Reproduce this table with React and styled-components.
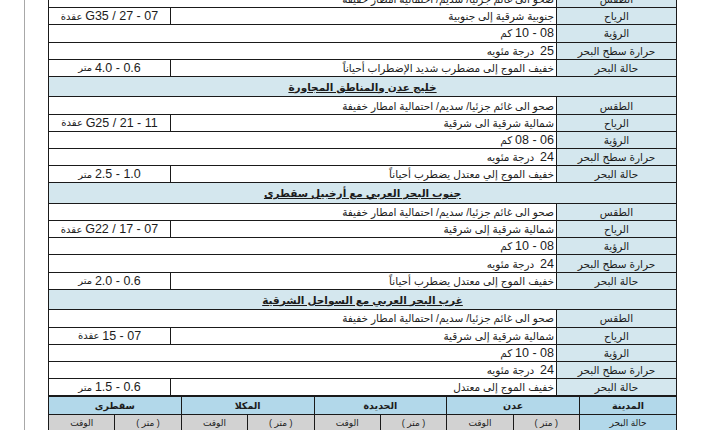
import styled, { createGlobalStyle } from 'styled-components';

const GlobalStyle = createGlobalStyle`
  html, body {
    margin: 0;
    padding: 0;
    background: #ffffff;
    overflow: hidden;
  }
  body {
    font-family: "Liberation Sans", "DejaVu Sans", sans-serif;
    color: #1c1c1c;
  }
`;

const COLOR = {
  line: '#1a1a1a',
  label: '#d4e7ee',
  section: '#d4e7ee',
  head: '#b2d8ea',
  sub: '#d2d2d2',
  page: '#a8a8a8',
};

const Sheet = styled.div`
  margin-left: 24px;
  width: 676px;
  height: 430px;
  border-left: 1px solid ${COLOR.page};
  border-right: 1px solid ${COLOR.page};
  padding: 0 24px 0 23px;
  box-sizing: content-box;
  display: flex;
  flex-direction: column;
`;

const Forecast = styled.div`
  direction: rtl;
  width: 629px;
  margin-top: -10px;
  border: 1.5px solid ${COLOR.line};
  border-bottom: none;
  box-sizing: border-box;
`;

const Row = styled.div`
  display: grid;
  grid-template-columns: ${(p) => (p.$split ? '119px 386px 1fr' : '119px 1fr')};
  height: 17.2px;
  border-bottom: 1.5px solid ${COLOR.line};
  box-sizing: border-box;
`;

const Label = styled.div`
  background: ${COLOR.label};
  font-size: 10.5px;
  display: flex;
  align-items: center;
  justify-content: center;
  white-space: nowrap;
  overflow: hidden;
`;

const Value = styled.div`
  border-right: 1.5px solid ${COLOR.line};
  font-size: 10.5px;
  display: flex;
  align-items: center;
  padding-right: 2px;
  white-space: nowrap;
  overflow: hidden;
`;

const Side = styled.div`
  border-right: 1.5px solid ${COLOR.line};
  font-size: 10px;
  display: flex;
  align-items: center;
  justify-content: center;
  white-space: nowrap;
  overflow: hidden;
`;

const Num = styled.span`
  font-family: "Liberation Sans", Arial, sans-serif;
  font-size: 12.5px;
`;

const SectionHead = styled.div`
  height: 20.5px;
  background: ${COLOR.section};
  border-bottom: 1.5px solid ${COLOR.line};
  box-sizing: border-box;
  display: flex;
  align-items: center;
  justify-content: center;
  font-size: 10.5px;
  font-weight: bold;
  text-decoration: underline;
`;

const Tides = styled.div`
  direction: rtl;
  width: 629px;
  display: grid;
  grid-template-columns: 97px repeat(8, 1fr);
  grid-auto-rows: 17.5px;
  border-top: 1.5px solid ${COLOR.line};
  border-right: 1.5px solid ${COLOR.line};
  box-sizing: border-box;
`;

const TideCell = styled.div`
  grid-column: span ${(p) => p.$span || 1};
  background: ${(p) => (p.$head ? COLOR.head : COLOR.sub)};
  border-left: 1.5px solid ${COLOR.line};
  border-bottom: 1.5px solid ${COLOR.line};
  font-size: ${(p) => (p.$head ? '9.5px' : '9px')};
  font-weight: ${(p) => (p.$head ? 'bold' : 'normal')};
  display: flex;
  align-items: center;
  justify-content: center;
  white-space: nowrap;
  overflow: hidden;
  ${(p) => p.$city && `background: ${COLOR.head};`}
`;

const WEATHER = 'صحو الى غائم جزئيا/ سديم/ احتمالية امطار خفيفة';

const sections = [
  {
    title: null,
    wind: 'جنوبية شرقية إلى جنوبية',
    speed: '07 - 27 / G35',
    vis: '08 - 10',
    sst: '25',
    sea: 'خفيف الموج إلى مضطرب شديد الإضطراب أحياناً',
    waves: '0.6 - 4.0',
  },
  {
    title: 'خليج عدن والمناطق المجاورة',
    wind: 'شمالية شرقية الى شرقية',
    speed: '11 - 21 / G25',
    vis: '06 - 08',
    sst: '24',
    sea: 'خفيف الموج إلي معتدل يضطرب أحياناً',
    waves: '1.0 - 2.5',
  },
  {
    title: 'جنوب البحر العربي مع أرخبيل سقطرى',
    wind: 'شمالية شرقية إلى شرقية',
    speed: '07 - 17 / G22',
    vis: '08 - 10',
    sst: '24',
    sea: 'خفيف الموج إلى معتدل يضطرب أحياناً',
    waves: '0.6 - 2.0',
  },
  {
    title: 'غرب البحر العربي مع السواحل الشرقية',
    wind: 'شمالية شرقية إلى شرقية',
    speed: '07 - 15',
    vis: '08 - 10',
    sst: '24',
    sea: 'خفيف الموج إلى معتدل',
    waves: '0.6 - 1.5',
  },
];

const ports = ['عدن', 'الحديدة', 'المكلا', 'سقطرى'];

function Section({ s }) {
  return (
    <>
      {s.title && <SectionHead>{s.title}</SectionHead>}
      <Row>
        <Label>الطقس</Label>
        <Value>{WEATHER}</Value>
      </Row>
      <Row $split>
        <Label>الرياح</Label>
        <Value>{s.wind}</Value>
        <Side>
          <Num>{s.speed}</Num>&nbsp;عقدة
        </Side>
      </Row>
      <Row>
        <Label>الرؤية</Label>
        <Value>
          <Num>{s.vis}</Num>&nbsp;كم
        </Value>
      </Row>
      <Row>
        <Label>حرارة سطح البحر</Label>
        <Value>
          <Num>{s.sst}</Num>&nbsp;&nbsp;درجة مئويه
        </Value>
      </Row>
      <Row $split>
        <Label>حالة البحر</Label>
        <Value>{s.sea}</Value>
        <Side>
          <Num>{s.waves}</Num>&nbsp;متر
        </Side>
      </Row>
    </>
  );
}

export default function App() {
  return (
    <>
      <GlobalStyle />
      <Sheet>
        <Forecast>
          {sections.map((s, i) => (
            <Section key={i} s={s} />
          ))}
        </Forecast>
        <Tides>
          <TideCell $head>المدينة</TideCell>
          {ports.map((p) => (
            <TideCell key={p} $head $span={2}>
              {p}
            </TideCell>
          ))}
          <TideCell $city>حالة البحر</TideCell>
          {ports.map((p) => (
            <>
              <TideCell key={p + 'm'}>( متر )</TideCell>
              <TideCell key={p + 't'}>الوقت</TideCell>
            </>
          ))}
        </Tides>
      </Sheet>
    </>
  );
}
